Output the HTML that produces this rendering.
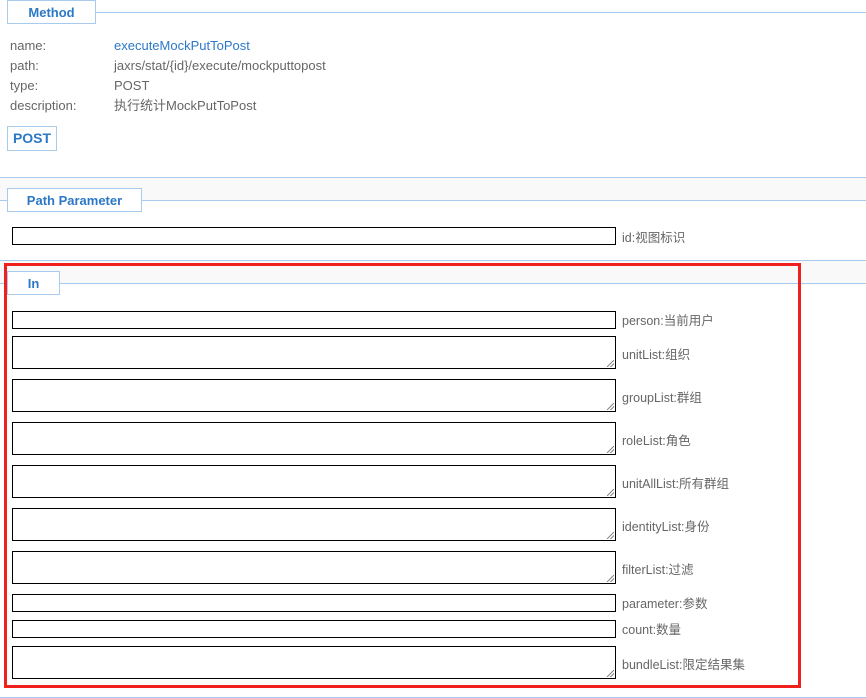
<!DOCTYPE html>
<html><head><meta charset="utf-8"><style>
body{margin:0;width:866px;height:698px;position:relative;background:#fff;font-family:"Liberation Sans","Noto Sans CJK SC",sans-serif;font-size:13px;color:#666;overflow:hidden}
.a{position:absolute}
.hl{position:absolute;left:0;right:0;height:1px;background:#a6cbec}
.tab{position:absolute;background:#fff;border:1px solid #a6cbec;color:#2c78c8;font-weight:bold;font-size:13px;text-align:center;box-sizing:border-box}
.in{position:absolute;left:12px;width:604px;border:1px solid #000;box-sizing:border-box;background:#fff}
.lb{position:absolute;left:622px;font-size:12.5px;color:#666}
.rs{position:absolute;right:1px;bottom:1px;width:7px;height:7px;background:linear-gradient(135deg,transparent 45%,#888 45%,#888 55%,transparent 55%,transparent 70%,#888 70%,#888 80%,transparent 80%)}
</style></head><body>
<div class="hl" style="top:12px;left:95px"></div>
<div class="tab" style="left:7px;top:0;width:89px;height:24px;line-height:23px">Method</div>
<div class="a" style="left:10px;top:36px;line-height:20px">name:<br>path:<br>type:<br>description:</div>
<div class="a" style="left:114px;top:36px;line-height:20px"><span style="color:#2c78c8">executeMockPutToPost</span><br>jaxrs/stat/{id}/execute/mockputtopost<br>POST<br>执行统计MockPutToPost</div>
<div class="tab" style="left:7px;top:126px;width:50px;height:25px;line-height:23px;font-size:14px">POST</div>
<div class="hl" style="top:177px"></div>
<div class="a" style="left:0;right:0;top:178px;height:22px;background:#f9f9f9"></div>
<div class="hl" style="top:200px"></div>
<div class="tab" style="left:7px;top:188px;width:135px;height:24px;line-height:23px">Path Parameter</div>
<div class="in" style="top:227px;height:18px"></div><div class="lb" style="top:227px">id:视图标识</div>
<div class="hl" style="top:260px"></div>
<div class="a" style="left:0;right:0;top:261px;height:22px;background:#f9f9f9"></div>
<div class="hl" style="top:283px"></div>
<div class="tab" style="left:7px;top:271px;width:53px;height:24px;line-height:23px">In</div>
<div class="a" style="left:4px;top:263px;width:797px;height:425px;border:3px solid #f0201c;box-sizing:border-box"></div>
<div class="in" style="top:311px;height:18px"></div><div class="lb" style="top:310px">person:当前用户</div>
<div class="in" style="top:336px;height:33px"><div class="rs"></div></div><div class="lb" style="top:344px">unitList:组织</div>
<div class="in" style="top:379px;height:33px"><div class="rs"></div></div><div class="lb" style="top:387px">groupList:群组</div>
<div class="in" style="top:422px;height:33px"><div class="rs"></div></div><div class="lb" style="top:430px">roleList:角色</div>
<div class="in" style="top:465px;height:33px"><div class="rs"></div></div><div class="lb" style="top:473px">unitAllList:所有群组</div>
<div class="in" style="top:508px;height:33px"><div class="rs"></div></div><div class="lb" style="top:516px">identityList:身份</div>
<div class="in" style="top:551px;height:33px"><div class="rs"></div></div><div class="lb" style="top:559px">filterList:过滤</div>
<div class="in" style="top:594px;height:18px"></div><div class="lb" style="top:593px">parameter:参数</div>
<div class="in" style="top:620px;height:18px"></div><div class="lb" style="top:619px">count:数量</div>
<div class="in" style="top:646px;height:33px"><div class="rs"></div></div><div class="lb" style="top:654px">bundleList:限定结果集</div>
<div class="hl" style="top:697px"></div>
</body></html>
